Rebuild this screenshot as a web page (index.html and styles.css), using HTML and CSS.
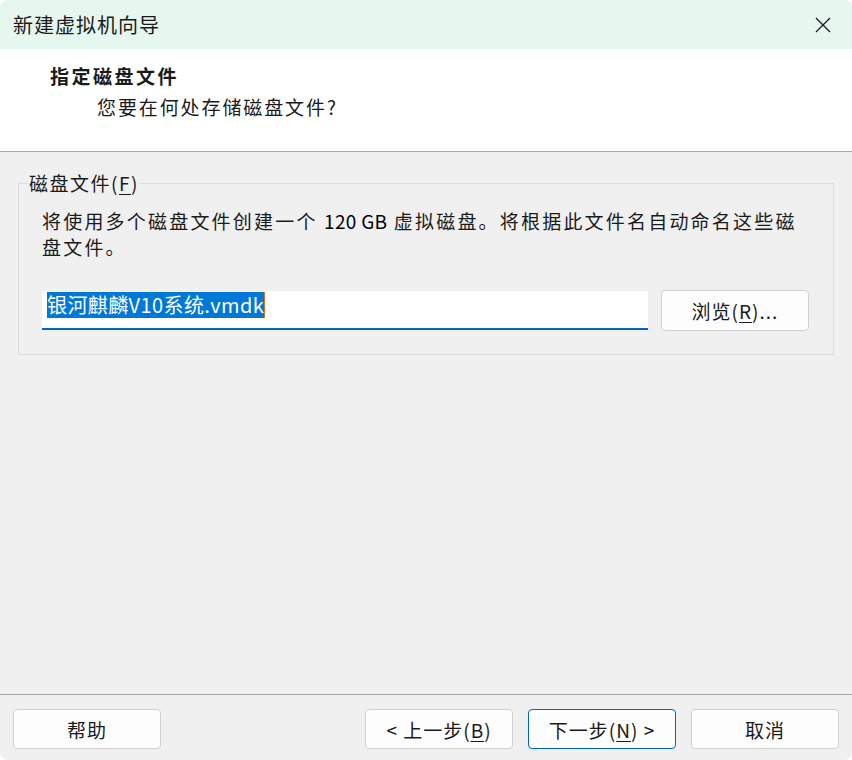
FILE: index.html
```html
<!DOCTYPE html>
<html lang="zh-CN">
<head>
<meta charset="utf-8">
<title>新建虚拟机向导</title>
<link rel="stylesheet" href="styles.css">
</head>
<body>
<div class="window">
  <div class="titlebar">
    <span class="title">新建虚拟机向导</span>
    <span class="close">
      <svg width="16" height="16" viewBox="0 0 16 16"><path d="M1 1 L15 15 M15 1 L1 15" stroke="#1a1a1a" stroke-width="1.3" fill="none"/></svg>
    </span>
  </div>
  <div class="header">
    <div class="h-title">指定磁盘文件</div>
    <div class="h-sub">您要在何处存储磁盘文件?</div>
  </div>
  <div class="content">
    <fieldset class="group">
      <legend class="group-label">磁盘文件(<u>F</u>)</legend>
      <p class="desc">将使用多个磁盘文件创建一个 <span class="num">120 GB</span> 虚拟磁盘。将根据此文件名自动命名这些磁<br>盘文件。</p>
      <div class="file-row">
        <div class="textbox"><span class="sel">银河麒麟V10系统.vmdk</span><span class="caret"></span></div>
        <button class="btn browse">浏览(<u>R</u>)...</button>
      </div>
    </fieldset>
  </div>
  <div class="footer">
    <button class="btn">帮助</button>
    <div class="spacer"></div>
    <button class="btn">&lt; 上一步(<u>B</u>)</button>
    <button class="btn primary">下一步(<u>N</u>) &gt;</button>
    <button class="btn">取消</button>
  </div>
</div>
</body>
</html>
```

FILE: styles.css
```css
* { box-sizing: border-box; }
html, body {
  margin: 0;
  padding: 0;
  background: #ffffff;
  width: 852px;
  height: 760px;
  overflow: hidden;
}
body {
  font-family: "Noto Sans CJK SC", "Noto Sans", sans-serif;
  color: #1a1a1a;
}
.window {
  width: 852px;
  height: 760px;
  display: flex;
  flex-direction: column;
  border-radius: 8px;
  overflow: hidden;
  background: #f0f0f0;
}
.titlebar {
  height: 49px;
  flex: none;
  background: #e6f7ef;
  display: flex;
  align-items: center;
  padding-left: 13px;
  padding-right: 21px;
}
.title {
  font-size: 20px;
  line-height: 24px;
  flex: 1;
  letter-spacing: 1px;
}
.close {
  width: 16px;
  height: 16px;
  display: flex;
}
.header {
  height: 103px;
  flex: none;
  background: #ffffff;
  border-bottom: 1px solid #a8a8a8;
  padding: 12px 0 0 50px;
}
.h-title {
  font-size: 19px;
  font-weight: bold;
  line-height: 30px;
  letter-spacing: 2.5px;
}
.h-sub {
  font-size: 19px;
  line-height: 30px;
  margin-left: 47px;
  margin-top: 1px;
  letter-spacing: 1.9px;
}
.content {
  flex: 1;
  padding: 18px 18px 0 18px;
  border-bottom: 1px solid #a8a8a8;
}
.group {
  margin: 0;
  border: 1px solid #dcdcdc;
  padding: 0 24px 23px 23px;
}
.group-label {
  font-size: 19px;
  line-height: 26px;
  padding: 0 1px;
  margin-left: -14px;
  letter-spacing: 1.5px;
}
.desc {
  margin: 12px 0 0 0;
  font-size: 19px;
  line-height: 26px;
  letter-spacing: 2.2px;
}
.num {
  letter-spacing: 0.3px;
  color: #000;
}
.file-row {
  display: flex;
  align-items: center;
  gap: 13px;
  margin-top: 30px;
}
.textbox {
  flex: 1;
  height: 39px;
  background: #ffffff;
  border-bottom: 2px solid #0067c0;
  padding: 1px 0 0 5px;
  display: flex;
  align-items: flex-start;
}
.sel {
  background: #0078d7;
  color: #ffffff;
  font-size: 20px;
  line-height: 26px;
  height: 26px;
  letter-spacing: 0.4px;
}
.caret {
  width: 1px;
  height: 26px;
  background: #e07020;
}
.btn {
  width: 148px;
  height: 40px;
  background: #fdfdfd;
  border: 1px solid #d0d0d0;
  border-radius: 4px;
  font-family: "Noto Sans CJK SC", "Noto Sans", sans-serif;
  font-size: 19px;
  color: #1a1a1a;
  padding: 0;
  letter-spacing: 1px;
}
.browse {
  height: 41px;
}
.btn.primary {
  border-color: #0067c0;
}
.footer {
  height: 65px;
  flex: none;
  display: flex;
  align-items: flex-start;
  padding: 14px 13px 0 13px;
  gap: 15px;
}
.spacer { flex: 1; }
u { text-underline-offset: 3px; }
```
